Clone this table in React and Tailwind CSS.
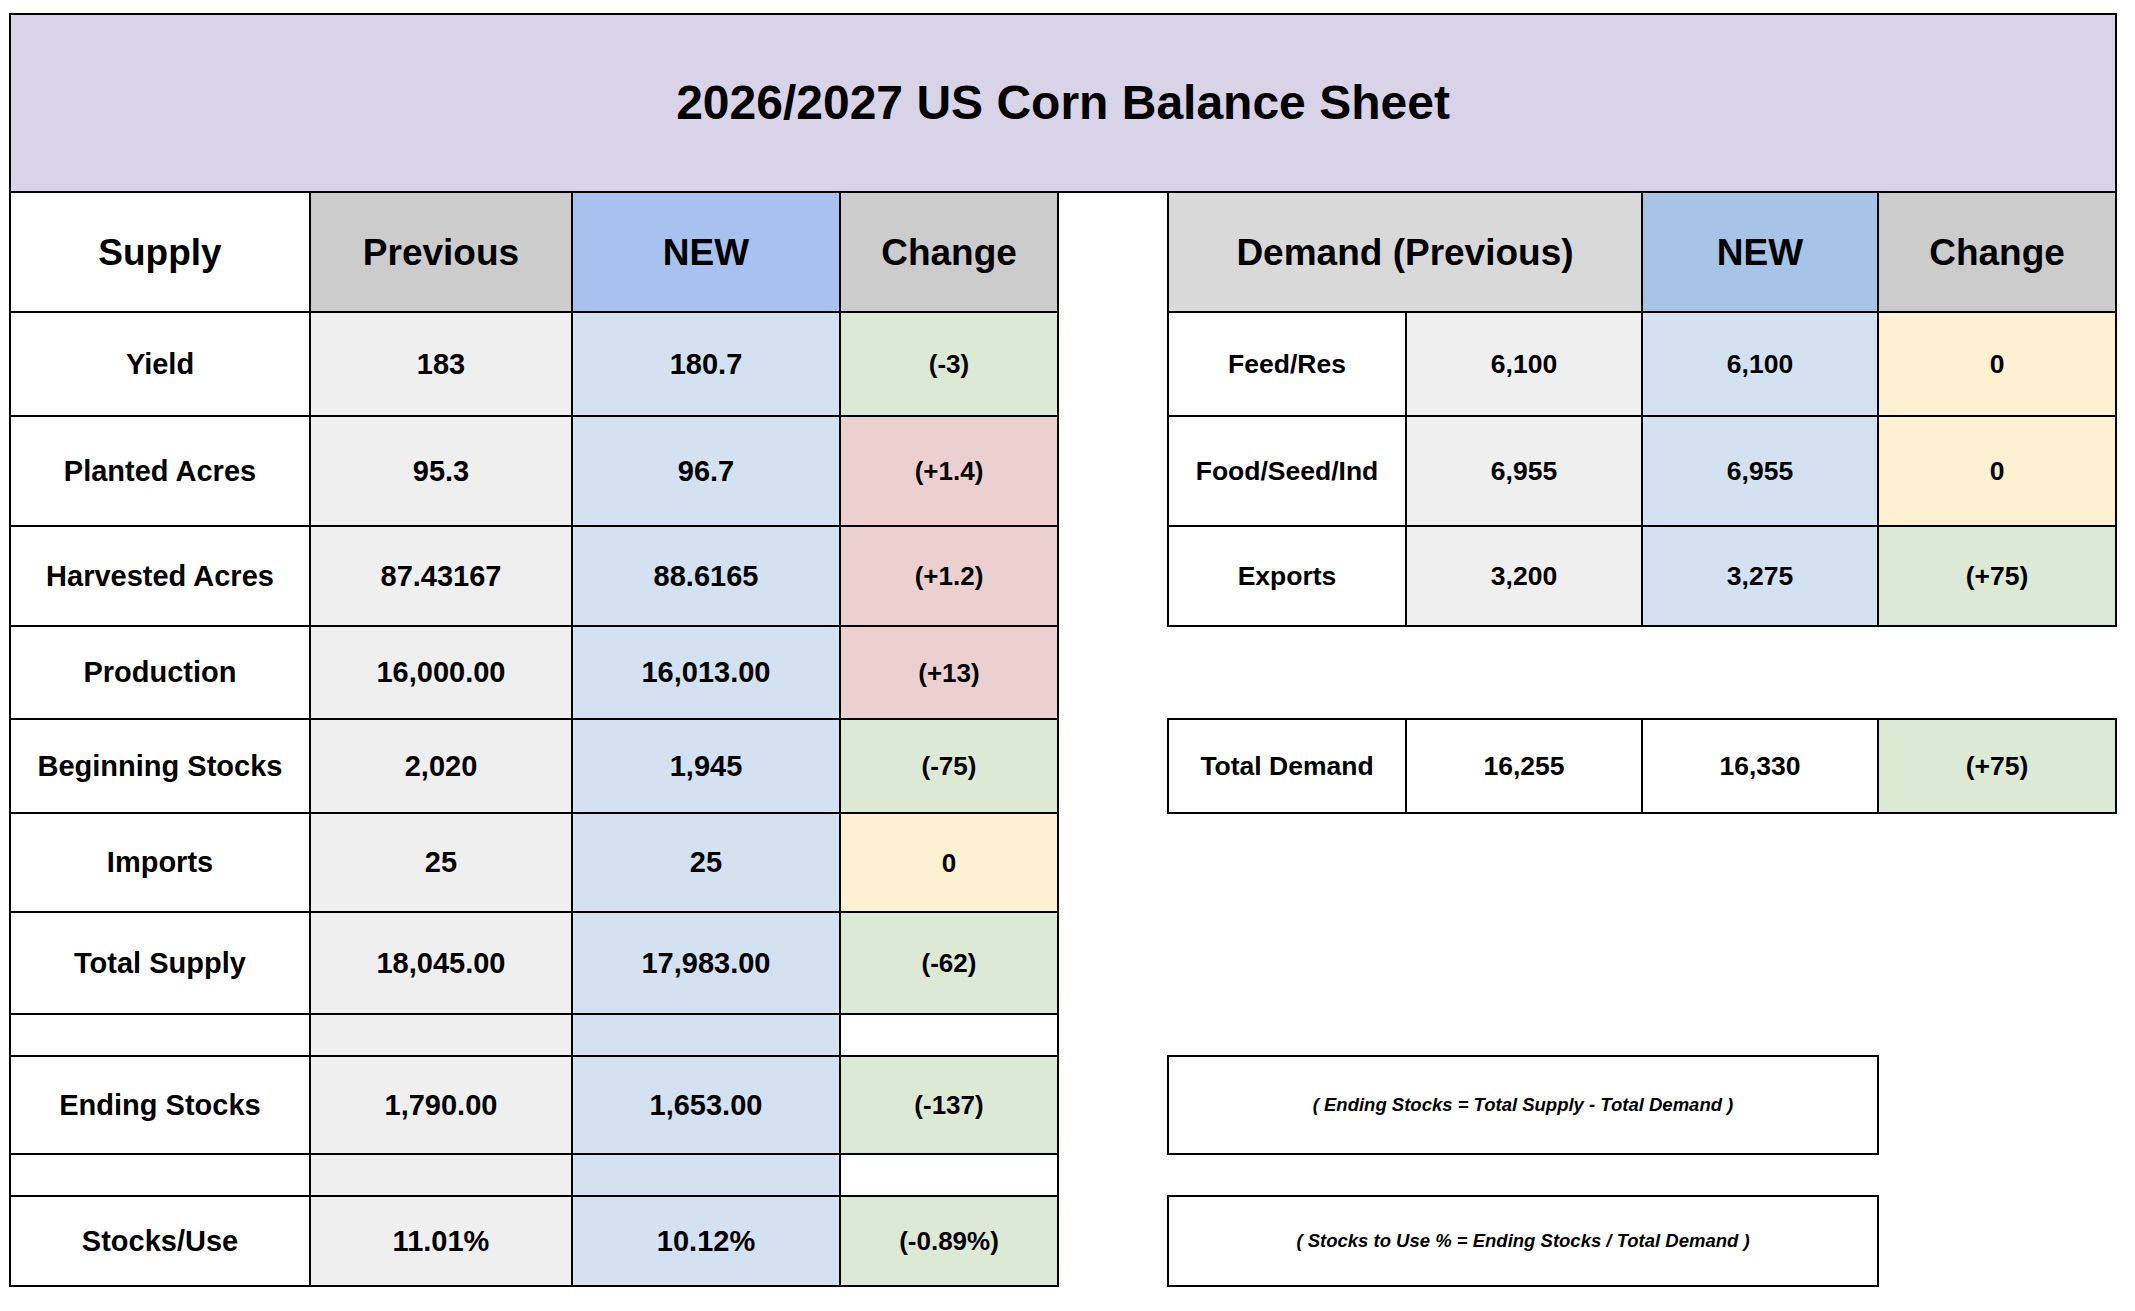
import React from "react";

const base =
  "flex shrink-0 items-center justify-center border-b-2 border-r-2 border-black font-bold leading-none";

const GREEN = "bg-[#dce9d5]";
const PINK = "bg-[#eccfcf]";
const YELLOW = "bg-[#fdf1d1]";

const leftRows = [
  { h: "h-[104px]", label: "Yield", prev: "183", nw: "180.7", chg: "(-3)", c: GREEN },
  { h: "h-[110px]", label: "Planted Acres", prev: "95.3", nw: "96.7", chg: "(+1.4)", c: PINK },
  { h: "h-[100px]", label: "Harvested Acres", prev: "87.43167", nw: "88.6165", chg: "(+1.2)", c: PINK },
  { h: "h-[93px]", label: "Production", prev: "16,000.00", nw: "16,013.00", chg: "(+13)", c: PINK },
  { h: "h-[94px]", label: "Beginning Stocks", prev: "2,020", nw: "1,945", chg: "(-75)", c: GREEN },
  { h: "h-[99px]", label: "Imports", prev: "25", nw: "25", chg: "0", c: YELLOW },
  { h: "h-[102px]", label: "Total Supply", prev: "18,045.00", nw: "17,983.00", chg: "(-62)", c: GREEN },
  { h: "h-[42px]", spacer: true },
  { h: "h-[98px]", label: "Ending Stocks", prev: "1,790.00", nw: "1,653.00", chg: "(-137)", c: GREEN },
  { h: "h-[42px]", spacer: true },
  { h: "h-[90px]", label: "Stocks/Use", prev: "11.01%", nw: "10.12%", chg: "(-0.89%)", c: GREEN },
];

function LeftCells({ r }) {
  if (r.spacer) {
    return (
      <>
        <div className={`${base} w-[302px] border-l-2 bg-white`} />
        <div className={`${base} w-[262px] bg-[#efefef]`} />
        <div className={`${base} w-[268px] bg-[#d3e1f1]`} />
        <div className={`${base} w-[218px] bg-white`} />
      </>
    );
  }
  return (
    <>
      <div className={`${base} w-[302px] border-l-2 bg-white text-[29px]`}>{r.label}</div>
      <div className={`${base} w-[262px] bg-[#efefef] text-[29px]`}>{r.prev}</div>
      <div className={`${base} w-[268px] bg-[#d3e1f1] text-[29px]`}>{r.nw}</div>
      <div className={`${base} w-[218px] ${r.c} text-[26px]`}>{r.chg}</div>
    </>
  );
}

function DemandRow({ label, prev, nw, chg, c }) {
  return (
    <>
      <div className={`${base} w-[240px] border-l-2 bg-white text-[26.5px]`}>{label}</div>
      <div className={`${base} w-[236px] bg-[#efefef] text-[26.5px]`}>{prev}</div>
      <div className={`${base} w-[236px] bg-[#d3e1f1] text-[26.5px]`}>{nw}</div>
      <div className={`${base} w-[238px] ${c} text-[26.5px]`}>{chg}</div>
    </>
  );
}

function RightCells({ i }) {
  if (i === 0)
    return (
      <DemandRow label="Feed/Res" prev="6,100" nw="6,100" chg="0" c={YELLOW} />
    );
  if (i === 1)
    return (
      <DemandRow label="Food/Seed/Ind" prev="6,955" nw="6,955" chg="0" c={YELLOW} />
    );
  if (i === 2)
    return (
      <DemandRow label="Exports" prev="3,200" nw="3,275" chg="(+75)" c={GREEN} />
    );
  if (i === 4)
    return (
      <div className="-mt-[2px] flex h-[96px] shrink-0">
        <div className={`${base} w-[240px] border-l-2 border-t-2 bg-white text-[26.5px]`}>Total Demand</div>
        <div className={`${base} w-[236px] border-t-2 bg-white text-[26.5px]`}>16,255</div>
        <div className={`${base} w-[236px] border-t-2 bg-white text-[26.5px]`}>16,330</div>
        <div className={`${base} w-[238px] border-t-2 ${GREEN} text-[26.5px]`}>(+75)</div>
      </div>
    );
  if (i === 8)
    return (
      <div className="-mt-[2px] flex h-[100px] w-[712px] shrink-0 items-center justify-center border-2 border-black bg-white text-[18.5px] font-bold italic leading-none">
        ( Ending Stocks = Total Supply - Total Demand )
      </div>
    );
  if (i === 10)
    return (
      <div className="-mt-[2px] flex h-[92px] w-[712px] shrink-0 items-center justify-center border-2 border-black bg-white text-[18.5px] font-bold italic leading-none">
        ( Stocks to Use % = Ending Stocks / Total Demand )
      </div>
    );
  return null;
}

export default function App() {
  return (
    <div className="min-h-screen bg-white pl-[9px] pt-[13px] font-['Liberation_Sans',Arial,sans-serif] text-black">
      <div className="flex h-[180px] w-[2108px] items-center justify-center border-2 border-black bg-[#d9d3e8]">
        <h1 className="text-[48px] font-bold leading-none">2026/2027 US Corn Balance Sheet</h1>
      </div>

      <div className="flex h-[120px]">
        <div className={`${base} w-[302px] border-l-2 bg-white text-[37px]`}>Supply</div>
        <div className={`${base} w-[262px] bg-[#cccccc] text-[37px]`}>Previous</div>
        <div className={`${base} w-[268px] bg-[#a7c2ef] text-[37px]`}>NEW</div>
        <div className={`${base} w-[218px] bg-[#cccccc] text-[37px]`}>Change</div>
        <div className="w-[108px] shrink-0" />
        <div className={`${base} w-[476px] border-l-2 bg-[#d9d9d9] text-[37px]`}>Demand (Previous)</div>
        <div className={`${base} w-[236px] bg-[#a6c4e5] text-[37px]`}>NEW</div>
        <div className={`${base} w-[238px] bg-[#cccccc] text-[37px]`}>Change</div>
      </div>

      {leftRows.map((r, i) => (
        <div key={i} className={`flex ${r.h}`}>
          <LeftCells r={r} />
          <div className="w-[108px] shrink-0" />
          <RightCells i={i} />
        </div>
      ))}
    </div>
  );
}
